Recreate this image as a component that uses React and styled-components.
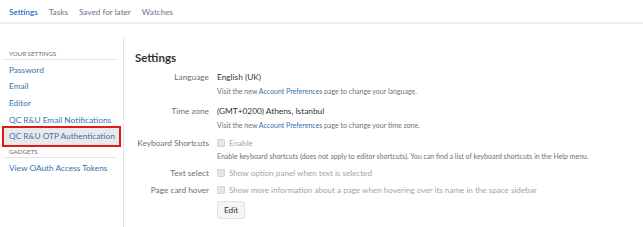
import React from "react";
import styled, { createGlobalStyle } from "styled-components";

const GlobalStyle = createGlobalStyle`
  html, body {
    margin: 0;
    padding: 0;
    background: #fff;
    font-family: Lato, "Open Sans", sans-serif;
    color: #333;
  }
`;

const tabs = ["Settings", "Tasks", "Saved for later", "Watches"];
const yourSettings = [
  "Password",
  "Email",
  "Editor",
  "QC R&U Email Notifications",
  "QC R&U OTP Authentication",
];

const App = () => {
  return (
    <Page>
      <GlobalStyle />
      <TabBar>
        {tabs.map((t, i) => (
          <Tab key={t} active={i === 0}>
            {t}
          </Tab>
        ))}
      </TabBar>
      <Body>
        <Sidebar>
          <GroupTitle>Your settings</GroupTitle>
          {yourSettings.map((s) => (
            <NavLink key={s} selected={s === "QC R&U OTP Authentication"}>
              {s}
            </NavLink>
          ))}
          <GroupTitle second>Gadgets</GroupTitle>
          <NavLink>View OAuth Access Tokens</NavLink>
        </Sidebar>
        <Main>
          <Heading>Settings</Heading>
          <Form>
            <Label>Language</Label>
            <Field gap={9}>
              <Value>English (UK)</Value>
              <Hint>
                Visit the new <a>Account Preferences</a> page to change your
                language.
              </Hint>
            </Field>
            <Label>Time zone</Label>
            <Field gap={7}>
              <Value>(GMT+0200) Athens, Istanbul</Value>
              <Hint>
                Visit the new <a>Account Preferences</a> page to change your
                time zone.
              </Hint>
            </Field>
            <Label>Keyboard Shortcuts</Label>
            <Field gap={6}>
              <Check>
                <Box />
                Enable
              </Check>
              <Hint small>
                Enable keyboard shortcuts (does not apply to editor shortcuts).
                You can find a list of keyboard shortcuts in the Help menu.
              </Hint>
            </Field>
            <Label>Text select</Label>
            <Field gap={5}>
              <Check>
                <Box />
                Show option panel when text is selected
              </Check>
            </Field>
            <Label>Page card hover</Label>
            <Field gap={5}>
              <Check>
                <Box />
                Show more information about a page when hovering over its name
                in the space sidebar
              </Check>
            </Field>
            <span />
            <Field gap={0}>
              <EditButton>Edit</EditButton>
            </Field>
          </Form>
        </Main>
      </Body>
    </Page>
  );
};

const Page = styled.div`
  width: 643px;
  height: 227px;
  overflow: hidden;
`;

const TabBar = styled.div`
  display: flex;
  gap: 11px;
  padding: 6px 0 0 9px;
  height: 16px;
  border-bottom: 2px solid #ebecf0;
`;

const Tab = styled.div`
  font-size: 8.2px;
  line-height: 12px;
  color: ${(p) => (p.active ? "#0052cc" : "#6b778c")};
`;

const Body = styled.div`
  display: flex;
  padding-top: 14px;
`;

const Sidebar = styled.div`
  box-sizing: border-box;
  width: 124px;
  height: 190px;
  flex-shrink: 0;
  padding: 12px 6px 0 4px;
  border-right: 1px solid #e4e4e4;
`;

const GroupTitle = styled.div`
  font-size: 6.2px;
  line-height: 7px;
  text-transform: uppercase;
  color: #6b6b6b;
  padding: 0 0 2px 5px;
  margin: ${(p) => (p.second ? "3px 0 1.5px" : "0 0 1.5px")};
  border-bottom: 1px solid #e6e6e6;
`;

const NavLink = styled.div`
  font-size: 8.3px;
  line-height: 12.7px;
  padding: 2px 5px;
  white-space: nowrap;
  color: #3572b0;
  background: ${(p) => (p.selected ? "#e9e9e9" : "transparent")};
  outline: ${(p) => (p.selected ? "2px solid #e0191d" : "none")};
  outline-offset: 0;
  margin-right: ${(p) => (p.selected ? "-2px" : "0")};
`;

const Main = styled.div`
  flex: 1;
  padding: 12px 0 0 11px;
`;

const Heading = styled.h2`
  margin: 0 0 5px 0;
  font-size: 11.5px;
  font-weight: 700;
  line-height: 16px;
  color: #333;
`;

const Form = styled.div`
  display: grid;
  grid-template-columns: 74px 1fr;
  column-gap: 8px;
`;

const Label = styled.div`
  text-align: right;
  font-size: 8.3px;
  line-height: 12px;
  color: #707070;
  white-space: nowrap;
`;

const Field = styled.div`
  padding-bottom: ${(p) => p.gap}px;
`;

const Value = styled.div`
  font-size: 8.3px;
  line-height: 12px;
  color: #333;
`;

const Hint = styled.div`
  font-size: 7px;
  line-height: 10px;
  margin-top: ${(p) => (p.small ? "2px" : "3px")};
  color: #707070;
  white-space: nowrap;
  a {
    color: #3572b0;
  }
`;

const Check = styled.label`
  display: flex;
  align-items: center;
  gap: 4px;
  font-size: 8.1px;
  line-height: 12px;
  color: #a5a5a5;
  white-space: nowrap;
`;

const Box = styled.span`
  box-sizing: border-box;
  width: 8px;
  height: 8px;
  border: 1px solid #d6d6d6;
  background: #e6e6e6;
  border-radius: 1px;
  flex-shrink: 0;
`;

const EditButton = styled.button`
  font-family: inherit;
  font-size: 8.3px;
  color: #333;
  background: #f4f5f7;
  border: 1px solid #dfe1e6;
  border-radius: 3px;
  height: 18px;
  padding: 0 6px;
  display: block;
`;

export default App;
